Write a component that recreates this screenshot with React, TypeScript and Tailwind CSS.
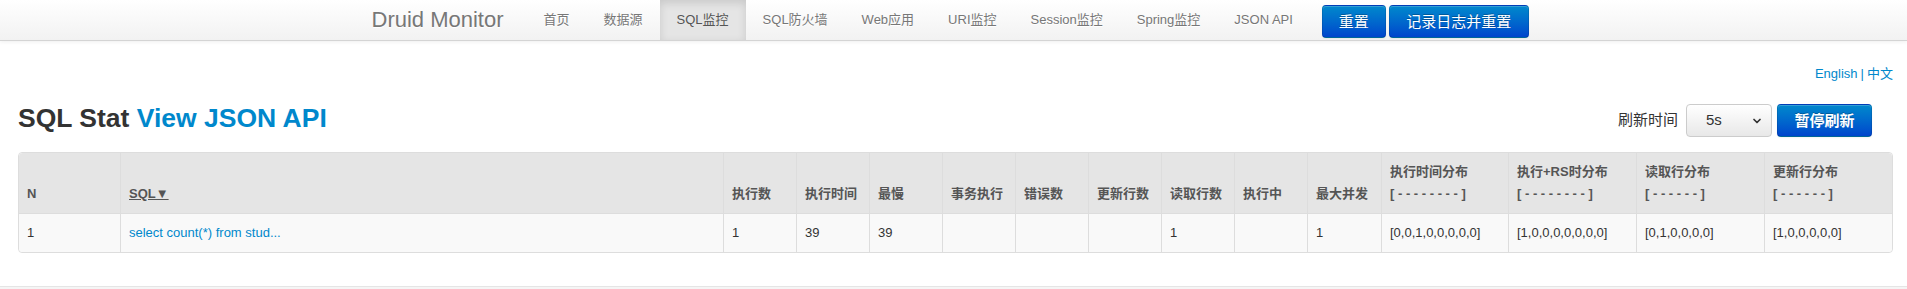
import { ChevronDown } from "lucide-react";

const navItems = [
  "首页",
  "数据源",
  "SQL监控",
  "SQL防火墙",
  "Web应用",
  "URI监控",
  "Session监控",
  "Spring监控",
  "JSON API",
];

type Col = { title: string; sub?: string; width?: string };

const cols: Col[] = [
  { title: "N", width: "101px" },
  { title: "SQL" },
  { title: "执行数", width: "73px" },
  { title: "执行时间", width: "73px" },
  { title: "最慢", width: "73px" },
  { title: "事务执行", width: "73px" },
  { title: "错误数", width: "73px" },
  { title: "更新行数", width: "73px" },
  { title: "读取行数", width: "73px" },
  { title: "执行中", width: "73px" },
  { title: "最大并发", width: "74px" },
  { title: "执行时间分布", sub: "[ - - - - - - - - ]", width: "127px" },
  { title: "执行+RS时分布", sub: "[ - - - - - - - - ]", width: "128px" },
  { title: "读取行分布", sub: "[ - - - - - - ]", width: "128px" },
  { title: "更新行分布", sub: "[ - - - - - - ]", width: "128px" },
];

const row = [
  "1",
  "select count(*) from stud...",
  "1",
  "39",
  "39",
  "",
  "",
  "",
  "1",
  "",
  "1",
  "[0,0,1,0,0,0,0,0]",
  "[1,0,0,0,0,0,0,0]",
  "[0,1,0,0,0,0]",
  "[1,0,0,0,0,0]",
];

const primaryBtn =
  "h-[33px] rounded-[4px] border border-[rgba(0,0,0,0.1)] border-b-[rgba(0,0,0,0.25)] bg-linear-to-b from-[#0088cc] to-[#0044cc] text-white text-[15px] leading-[20px] [text-shadow:0_-1px_0_rgba(0,0,0,0.25)] shadow-[inset_0_1px_0_rgba(255,255,255,0.2),0_1px_2px_rgba(0,0,0,0.05)]";

export default function App() {
  return (
    <div className="min-h-screen bg-white font-['Liberation_Sans',Arial,'Noto_Sans_CJK_SC',sans-serif] text-[13px] text-[#333]">
      {/* navbar */}
      <div className="border-b border-[#d4d4d4] bg-linear-to-b from-white to-[#f2f2f2] shadow-[0_1px_4px_rgba(0,0,0,0.065)]">
        <div className="mx-auto flex h-[40px] w-[1170px] items-start">
          <a className="pl-[3px] pr-[23px] text-[22px] leading-[40px] text-[#777] [text-shadow:0_1px_0_#fff]">
            Druid Monitor
          </a>
          <ul className="flex">
            {navItems.map((item) => (
              <li key={item}>
                <a
                  className={
                    item === "SQL监控"
                      ? "block bg-[#e5e5e5] px-[17px] text-[13px] leading-[40px] text-[#555] shadow-[inset_0_3px_8px_rgba(0,0,0,0.125)]"
                      : "block px-[17px] text-[13px] leading-[40px] text-[#777] [text-shadow:0_1px_0_#fff]"
                  }
                >
                  {item}
                </a>
              </li>
            ))}
          </ul>
          <div className="ml-[12px] mt-[5px] flex gap-[3px]">
            <button className={`${primaryBtn} w-[64px]`}>重置</button>
            <button className={`${primaryBtn} w-[140px]`}>记录日志并重置</button>
          </div>
        </div>
      </div>

      {/* content */}
      <div className="pl-[18px] pr-[14px]">
        <div className="mt-[23px] flex justify-end text-[13px] leading-[20px] text-[#0088cc]">
          <a>English</a>
          <span className="px-[3px]">|</span>
          <a>中文</a>
        </div>

        <div className="mt-[20px] flex items-start justify-between">
          <h2 className="text-[26.5px] font-bold leading-[28px] text-[#333]">
            SQL Stat <a className="text-[#0088cc]">View JSON API</a>
          </h2>
          <div className="flex items-center pr-[21px]">
            <span className="mr-[8px] text-[15px] text-[#333]">刷新时间</span>
            <div className="relative">
              <select className="h-[33px] w-[86px] appearance-none rounded-[4px] border border-[#ccc] bg-linear-to-b from-white to-[#e8e8e8] pl-[19px] text-[15px] text-[#333] outline-none">
                <option>5s</option>
                <option>10s</option>
                <option>30s</option>
              </select>
              <ChevronDown
                size={12}
                strokeWidth={3.5}
                className="pointer-events-none absolute right-[9px] top-[11px] text-[#333]"
              />
            </div>
            <button className={`${primaryBtn} ml-[5px] w-[95px] font-bold`}>
              暂停刷新
            </button>
          </div>
        </div>

        <table className="mt-[15px] w-full table-fixed border-separate border-spacing-0 rounded-[4px] border border-[#ddd]">
          <colgroup>
            {cols.map((c, i) => (
              <col key={i} style={c.width ? { width: c.width } : undefined} />
            ))}
          </colgroup>
          <thead>
            <tr>
              {cols.map((c, i) => (
                <th
                  key={i}
                  className={`bg-[#e5e5e5] px-2 pb-2 pt-2 text-left align-bottom text-[13px] font-bold leading-[22px] text-[#555] ${
                    i > 0 ? "border-l border-[#ddd]" : "rounded-tl-[4px]"
                  } ${i === cols.length - 1 ? "rounded-tr-[4px]" : ""}`}
                >
                  {i === 1 ? (
                    <a className="underline">SQL▼</a>
                  ) : (
                    <>
                      {c.title}
                      {c.sub && (
                        <>
                          <br />
                          {c.sub}
                        </>
                      )}
                    </>
                  )}
                </th>
              ))}
            </tr>
          </thead>
          <tbody>
            <tr>
              {row.map((v, i) => (
                <td
                  key={i}
                  className={`border-t border-[#ddd] bg-[#f9f9f9] px-2 py-2 text-[13px] leading-[22px] ${
                    i > 0 ? "border-l" : "rounded-bl-[4px]"
                  } ${i === row.length - 1 ? "rounded-br-[4px]" : ""}`}
                >
                  {i === 1 ? <a className="text-[#0088cc]">{v}</a> : v}
                </td>
              ))}
            </tr>
          </tbody>
        </table>
      </div>

      <div className="mt-[33px] h-[60px] border-t border-[#e5e5e5] bg-[#f5f5f5]" />
    </div>
  );
}
